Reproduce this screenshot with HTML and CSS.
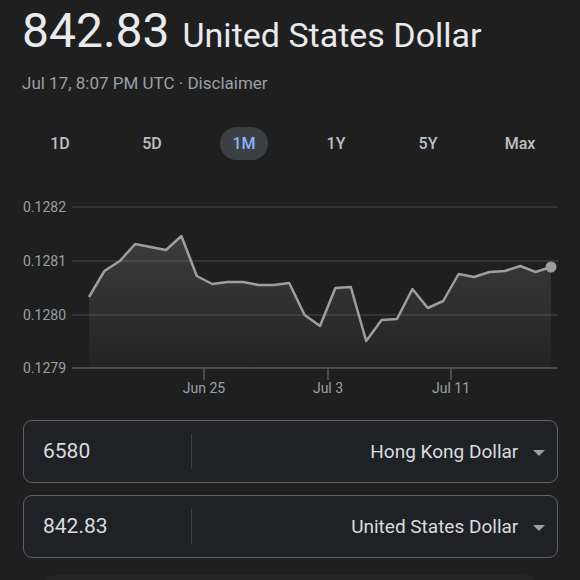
FILE: index.html
```html
<!DOCTYPE html>
<html lang="en">
<head>
  <meta charset="UTF-8">
  <meta name="viewport" content="width=device-width, initial-scale=1.0">
  <link rel="stylesheet" href="styles.css">
  <title>Currency converter</title>
</head>
<body>
  <div class="header">
    <div class="result"><span class="amount">842.83</span><span class="currency">United States Dollar</span></div>
    <div class="stamp">Jul 17, 8:07 PM UTC · Disclaimer</div>
  </div>

  <div class="ranges">
    <div class="range"><span>1D</span></div>
    <div class="range"><span>5D</span></div>
    <div class="range"><span class="active">1M</span></div>
    <div class="range"><span>1Y</span></div>
    <div class="range"><span>5Y</span></div>
    <div class="range"><span>Max</span></div>
  </div>

  <svg class="chart" width="580" height="220" viewBox="0 0 580 220">
    <defs>
      <linearGradient id="area" x1="0" y1="0" x2="0" y2="1">
        <stop offset="0" stop-color="#ffffff" stop-opacity="0.13"/>
        <stop offset="1" stop-color="#ffffff" stop-opacity="0.02"/>
      </linearGradient>
    </defs>
    <g class="grid">
      <line x1="72" y1="17" x2="558" y2="17"/>
      <line x1="72" y1="71" x2="558" y2="71"/>
      <line x1="72" y1="125" x2="558" y2="125"/>
    </g>
    <line class="axis" x1="72" y1="178" x2="558" y2="178"/>
    <g class="ticks">
      <line x1="204" y1="178" x2="204" y2="190"/>
      <line x1="328" y1="178" x2="328" y2="190"/>
      <line x1="451" y1="178" x2="451" y2="190"/>
    </g>
    <g class="ylabels">
      <text x="23" y="22">0.1282</text>
      <text x="23" y="76">0.1281</text>
      <text x="23" y="130">0.1280</text>
      <text x="23" y="183">0.1279</text>
    </g>
    <g class="xlabels">
      <text x="204" y="203">Jun 25</text>
      <text x="328" y="203">Jul 3</text>
      <text x="451" y="203">Jul 11</text>
    </g>
    <path id="area-path" class="area" fill="url(#area)" d=""/>
    <polyline id="line" class="line" points=""/>
    <circle id="dot" class="dot" r="5.5" cx="551" cy="77"/>
  </svg>

  <div class="converter">
    <div class="field">
      <div class="value">6580</div>
      <div class="unit">Hong Kong Dollar <span class="caret"></span></div>
    </div>
    <div class="field">
      <div class="value">842.83</div>
      <div class="unit">United States Dollar <span class="caret"></span></div>
    </div>
  </div>

  <div class="next-card"></div>

  <script>
    // rate points for the last month, y already in chart pixels
    const ys = [107, 81, 71, 54, 57, 60, 46, 86, 94, 92, 92, 95, 95, 93,
                125, 136, 98, 97, 151, 130, 129, 99, 118, 111, 84, 87, 82, 81, 76, 82, 77];
    const startX = 89, step = 15.4;
    const pts = ys.map((y, i) => [startX + i * step, y]);

    document.getElementById('line').setAttribute('points',
      pts.map(p => p[0].toFixed(1) + ',' + p[1]).join(' '));

    const last = pts[pts.length - 1];
    let d = 'M' + startX + ',178 ' + pts.map(p => 'L' + p[0].toFixed(1) + ',' + p[1]).join(' ');
    d += ' L' + last[0].toFixed(1) + ',178 Z';
    document.getElementById('area-path').setAttribute('d', d);

    const dot = document.getElementById('dot');
    dot.setAttribute('cx', last[0]);
    dot.setAttribute('cy', last[1]);
  </script>
</body>
</html>
```

FILE: styles.css
```css
body {
  margin: 0;
  background-color: #1f1f1f;
  color: #e8eaed;
  font-family: 'Roboto', 'Liberation Sans', sans-serif;
  overflow: hidden;
}

.header {
  padding: 3px 22px 0;
}

.result {
  display: flex;
  align-items: baseline;
  gap: 13px;
  height: 56px;
  line-height: 56px;
  white-space: nowrap;
}

.amount {
  font-size: 48px;
  color: #e8eaed;
}

.currency {
  font-size: 34px;
  color: #e8eaed;
}

.stamp {
  margin-top: 14px;
  font-size: 17px;
  line-height: 20px;
  color: #9aa0a6;
}

.ranges {
  display: flex;
  padding: 0 14px;
  margin-top: 34px;
}

.range {
  flex: 1;
  display: flex;
  justify-content: center;
}

.range span {
  display: inline-block;
  font-size: 16px;
  font-weight: 500;
  line-height: 17px;
  padding: 8px 12px;
  border-radius: 17px;
  color: #bdc1c6;
}

.range span.active {
  background-color: #3c4043;
  color: #8ab4f8;
}

.chart {
  display: block;
  margin-top: 30px;
}

.grid line {
  stroke: #3c3c3c;
  stroke-width: 1.5;
}

.axis,
.ticks line {
  stroke: #5a5a5a;
  stroke-width: 1.5;
}

.ylabels text,
.xlabels text {
  font-family: 'Roboto', 'Liberation Sans', sans-serif;
  font-size: 14px;
  fill: #9aa0a6;
}

.xlabels text {
  text-anchor: middle;
}

.line {
  fill: none;
  stroke: #9e9e9e;
  stroke-width: 2.5;
  stroke-linejoin: round;
}

.dot {
  fill: #9e9e9e;
}

.converter {
  margin: 10px 22px 0 23px;
  display: flex;
  flex-direction: column;
  gap: 12px;
}

.field {
  display: flex;
  align-items: center;
  height: 61px;
  border: 1px solid #5f6368;
  border-radius: 9px;
  background-color: #202124;
}

.value {
  width: 148px;
  padding-left: 19px;
  font-size: 21px;
  color: #dadce0;
  border-right: 1px solid #3c4043;
  line-height: 35px;
}

.unit {
  flex: 1;
  text-align: right;
  font-size: 19px;
  color: #dadce0;
  padding-right: 12px;
}

.caret {
  display: inline-block;
  width: 0;
  height: 0;
  margin-left: 10px;
  border-left: 6px solid transparent;
  border-right: 6px solid transparent;
  border-top: 6px solid #9aa0a6;
  vertical-align: middle;
}

.next-card {
  margin: 17px 40px 0;
  height: 30px;
  border-radius: 16px 16px 0 0;
  background-color: #252525;
}
```
